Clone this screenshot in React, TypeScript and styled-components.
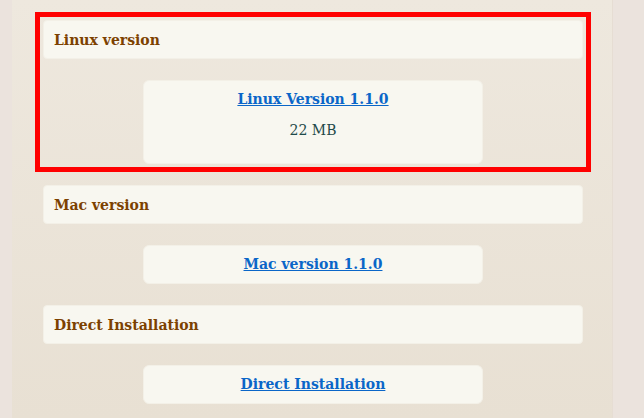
import styled, { createGlobalStyle } from 'styled-components';

type Download = {
  title: string;
  label: string;
  size?: string;
  highlighted?: boolean;
};

const DOWNLOADS: Download[] = [
  { title: 'Linux version', label: 'Linux Version 1.1.0', size: '22 MB', highlighted: true },
  { title: 'Mac version', label: 'Mac version 1.1.0' },
  { title: 'Direct Installation', label: 'Direct Installation' },
];

const GlobalStyle = createGlobalStyle`
  html, body {
    margin: 0;
    padding: 0;
    height: 100%;
    background: #ebe3dd;
    font-family: "DejaVu Serif", "Liberation Serif", serif;
  }
  #root {
    height: 100%;
  }
`;

const Page = styled.div`
  height: 418px;
  overflow: hidden;
  padding-left: 12px;
`;

const Column = styled.main`
  width: 601px;
  height: 100%;
  box-sizing: border-box;
  padding: 20px 29px 0 31px;
  background: linear-gradient(to bottom, #eee8de 0%, #e8e0d3 100%);
  border-right: 1px solid #e6ddd3;
  display: flex;
  flex-direction: column;
  gap: 21px;
`;

const Section = styled.section<{ $highlighted?: boolean }>`
  display: flex;
  flex-direction: column;
  align-items: center;
  gap: 21px;
  outline: ${(p) => (p.$highlighted ? '5px solid #ff0000' : 'none')};
  outline-offset: 3px;
`;

const Header = styled.h3`
  align-self: stretch;
  margin: 0;
  height: 39px;
  box-sizing: border-box;
  display: flex;
  align-items: center;
  padding: 0 10px;
  background: #f8f7f0;
  border: 1px solid #f3f0e7;
  border-radius: 4px;
  color: #7c4100;
  font-size: 14px;
  font-weight: bold;
`;

const DownloadBox = styled.div`
  width: 340px;
  box-sizing: border-box;
  min-height: 39px;
  padding: 10px 10px;
  background: #f8f7f0;
  border: 1px solid #f3f0e7;
  border-radius: 6px;
  display: flex;
  flex-direction: column;
  align-items: center;
  gap: 14px;
`;

const DownloadLink = styled.a`
  color: #0a66c8;
  font-size: 14px;
  font-weight: bold;
  text-decoration: underline;
  line-height: 17px;
`;

const Size = styled.span`
  color: #1f4a4a;
  font-size: 14px;
  line-height: 17px;
  padding-bottom: 14px;
`;

export default function App() {
  return (
    <>
      <GlobalStyle />
      <Page>
        <Column>
          {DOWNLOADS.map((d) => (
            <Section key={d.title} $highlighted={d.highlighted}>
              <Header>{d.title}</Header>
              <DownloadBox>
                <DownloadLink href="#">{d.label}</DownloadLink>
                {d.size && <Size>{d.size}</Size>}
              </DownloadBox>
            </Section>
          ))}
        </Column>
      </Page>
    </>
  );
}
